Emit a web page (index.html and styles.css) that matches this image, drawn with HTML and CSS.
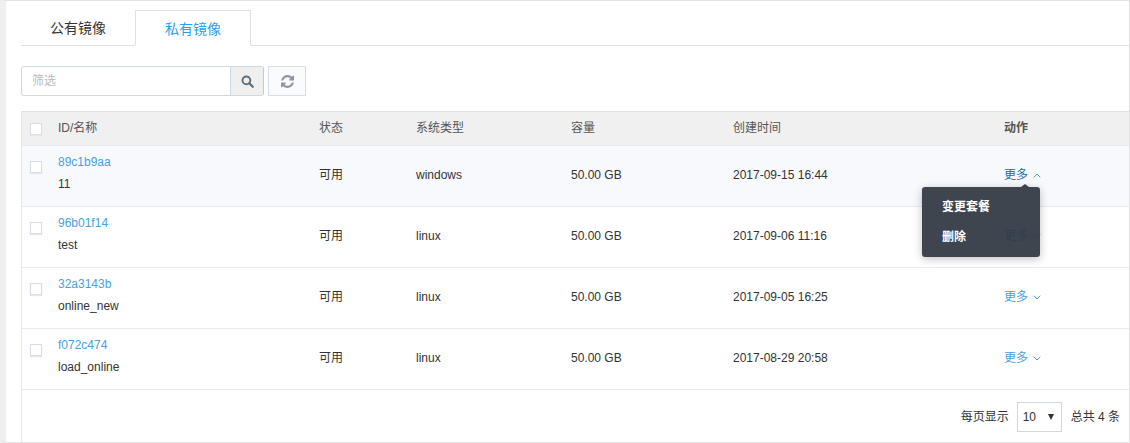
FILE: index.html
```html
<!DOCTYPE html>
<html lang="zh">
<head>
<meta charset="utf-8">
<title>私有镜像</title>
<link rel="stylesheet" href="styles.css">
</head>
<body>
<main class="page">
  <nav class="tabs">
    <a class="tab">公有镜像</a>
    <a class="tab active">私有镜像</a>
  </nav>
  <div class="toolbar">
    <div class="search">
      <input class="search-input" placeholder="筛选">
      <button class="search-btn" aria-label="搜索">
        <svg width="13" height="13" viewBox="0 0 13 13"><circle cx="5.4" cy="5.4" r="3.9" fill="none" stroke="#5f6b7a" stroke-width="1.9"/><path d="M8.3 8.3l3.5 3.5" stroke="#5f6b7a" stroke-width="2.2" stroke-linecap="round"/></svg>
      </button>
    </div>
    <button class="refresh" aria-label="刷新">
      <svg width="13" height="13" viewBox="0 0 1536 1536"><path fill="#8a96a8" d="M1511 928q0 5-1 7-64 268-268 434.500T764 1536q-146 0-282.500-55T238 1324l-129 129q-19 19-45 19t-45-19-19-45V960q0-26 19-45t45-19h448q26 0 45 19t19 45-19 45l-137 137q71 66 161 102t187 36q134 0 250-65t186-179q11-17 53-117 8-23 30-23h192q13 0 22.500 9.500t9.500 22.500zm25-800v448q0 26-19 45t-45 19h-448q-26 0-45-19t-19-45 19-45l138-138Q969 256 768 256q-134 0-250 65T332 500q-11 17-53 117-8 23-30 23H50q-13 0-22.500-9.500T18 608v-7q65-268 270-434.500T768 0q146 0 284 55.500T1297 212l130-129q19-19 45-19t45 19 19 45z"/></svg>
    </button>
  </div>
  <table class="grid">
    <thead>
      <tr>
        <th class="c-check"><span class="check"></span></th>
        <th class="c-id">ID/名称</th>
        <th class="c-status">状态</th>
        <th class="c-type">系统类型</th>
        <th class="c-size">容量</th>
        <th class="c-time">创建时间</th>
        <th class="c-action strong">动作</th>
      </tr>
    </thead>
    <tbody>
      <tr class="hover">
        <td class="check-cell"><span class="check"></span></td>
        <td class="id-cell"><a class="id">89c1b9aa</a><div class="name">11</div></td>
        <td>可用</td><td>windows</td><td>50.00 GB</td><td>2017-09-15 16:44</td>
        <td class="action-cell">
          <a class="more open">更多<svg class="chev" width="8" height="5" viewBox="0 0 8 5"><path d="M.7 4.300L4 1l3.300 3.300" fill="none" stroke="currentColor"/></svg></a>
          <div class="menu">
            <a class="menu-item">变更套餐</a>
            <a class="menu-item">删除</a>
          </div>
        </td>
      </tr>
      <tr>
        <td class="check-cell"><span class="check"></span></td>
        <td class="id-cell"><a class="id">96b01f14</a><div class="name">test</div></td>
        <td>可用</td><td>linux</td><td>50.00 GB</td><td>2017-09-06 11:16</td>
        <td><a class="more">更多<svg class="chev" width="8" height="5" viewBox="0 0 8 5"><path d="M.7.700L4 4l3.300-3.300" fill="none" stroke="currentColor"/></svg></a></td>
      </tr>
      <tr>
        <td class="check-cell"><span class="check"></span></td>
        <td class="id-cell"><a class="id">32a3143b</a><div class="name">online_new</div></td>
        <td>可用</td><td>linux</td><td>50.00 GB</td><td>2017-09-05 16:25</td>
        <td><a class="more">更多<svg class="chev" width="8" height="5" viewBox="0 0 8 5"><path d="M.7.700L4 4l3.300-3.300" fill="none" stroke="currentColor"/></svg></a></td>
      </tr>
      <tr>
        <td class="check-cell"><span class="check"></span></td>
        <td class="id-cell"><a class="id">f072c474</a><div class="name">load_online</div></td>
        <td>可用</td><td>linux</td><td>50.00 GB</td><td>2017-08-29 20:58</td>
        <td><a class="more">更多<svg class="chev" width="8" height="5" viewBox="0 0 8 5"><path d="M.7.700L4 4l3.300-3.300" fill="none" stroke="currentColor"/></svg></a></td>
      </tr>
    </tbody>
  </table>
  <footer class="pager">
    <span>每页显示</span>
    <span class="select"><span>10</span><i class="arrow"></i></span>
    <span class="total">总共 4 条</span>
  </footer>
</main>
</body>
</html>
```
FILE: styles.css
```css
* { box-sizing: border-box; }
html, body { margin: 0; padding: 0; height: 443px; overflow: hidden; background: #fff; }
body {
  font-family: "Liberation Sans", "Noto Sans CJK SC", sans-serif;
  font-size: 12px;
  line-height: 16px;
  color: #333;
}
.page {
  height: 443px;
  border-top: 1px solid #e3e3e3;
  border-right: 1px solid #e3e3e3;
  border-bottom: 1px solid #e3e3e3;
  border-left: 6px solid #eeeff1;
  padding: 9px 0 0 15px;
  display: flex;
  flex-direction: column;
}
.tabs {
  display: flex;
  height: 36px;
  border-bottom: 1px solid #dde1e8;
}
.tab {
  width: 114px;
  height: 36px;
  font-size: 14px;
  line-height: 36px;
  text-align: center;
  color: #333;
}
.tab.active {
  width: 116px;
  color: #2d9cf4;
  background: #fff;
  border: 1px solid #dde1e8;
  border-bottom-color: #fff;
}
.toolbar {
  display: flex;
  gap: 4px;
  margin-top: 20px;
  height: 30px;
}
.search {
  display: flex;
  width: 243px;
  height: 30px;
  border: 1px solid #cfd9e6;
  border-right-color: #c9c9c9;
  border-radius: 3px;
  overflow: hidden;
}
.search-input {
  flex: 1;
  min-width: 0;
  border: 0;
  outline: 0;
  padding: 0 10px;
  font: inherit;
  color: #333;
}
.search-input::placeholder { color: #bbb; }
.search-btn {
  width: 33px;
  padding: 0;
  border: 0;
  border-left: 1px solid #cfd9e6;
  background: #efefef;
  display: flex;
  align-items: center;
  justify-content: center;
}
.refresh {
  width: 38px;
  height: 30px;
  padding: 0;
  border: 1px solid #d5dee9;
  background: #f9fbfd;
  display: flex;
  align-items: center;
  justify-content: center;
}
.grid {
  margin-top: 15px;
  width: 1108px;
  table-layout: fixed;
  border-collapse: separate;
  border-spacing: 0;
  border-left: 1px solid #e3e6ec;
  border-top: 1px solid #dfe2e7;
}
th, td {
  padding: 0 0 2px;
  text-align: left;
  font-weight: normal;
  vertical-align: middle;
  border-bottom: 1px solid #e6e9ef;
}
th {
  height: 34px;
  background: #f0f0f0;
  color: #555;
}
td { height: 61px; }
th.strong { font-weight: bold; }
.c-check { width: 36px; }
.c-id { width: 261px; }
.c-status { width: 97px; }
.c-type { width: 155px; }
.c-size { width: 162px; }
.c-time { width: 271px; }
.check {
  display: block;
  width: 12px;
  height: 12px;
  margin-left: 8px;
  border: 1px solid #d5dde8;
  box-shadow: 0 1px 1px #e4e7ec;
  background: #fff;
}
th.c-check { padding: 0; }
td.check-cell { vertical-align: top; padding: 15px 0 0; }
td.id-cell { padding-bottom: 6px; }
.hover td { background: #f8f9fd; }
.id { color: #4a9fdc; display: block; }
.name { margin-top: 6px; }
.more {
  color: #4a9fdc;
  display: inline-flex;
  align-items: center;
  gap: 5px;
}
.more.open { color: #1a6da8; }
.open .chev { color: #4a9fdc; }
.chev { display: block; }
.action-cell { position: relative; }
.menu {
  position: absolute;
  left: -82px;
  top: 41px;
  width: 118px;
  height: 70px;
  z-index: 2;
  padding: 5px 0;
  background: rgba(46, 53, 63, 0.92);
  border-radius: 3px;
  box-shadow: 0 2px 8px rgba(0, 0, 0, 0.25);
}
.menu::before {
  content: "";
  position: absolute;
  right: 11px;
  top: -3px;
  border-left: 4px solid transparent;
  border-right: 4px solid transparent;
  border-bottom: 3px solid rgba(46, 53, 63, 0.92);
}
.menu-item {
  display: block;
  height: 30px;
  line-height: 30px;
  padding-left: 20px;
  color: #fff;
  font-weight: bold;
}
.pager {
  display: flex;
  align-items: center;
  justify-content: flex-end;
  height: 52px;
  padding: 2px 9px 0 0;
  border-left: 1px solid #e3e6ec;
  width: 1108px;
}
.select {
  display: flex;
  align-items: center;
  justify-content: space-between;
  width: 45px;
  height: 30px;
  margin: 0 9px 0 8px;
  padding: 0 7px 0 5px;
  border: 1px solid #cfd9e6;
  color: #333;
}
.arrow {
  border-left: 3.500px solid transparent;
  border-right: 3.500px solid transparent;
  border-top: 6px solid #333;
}
```
